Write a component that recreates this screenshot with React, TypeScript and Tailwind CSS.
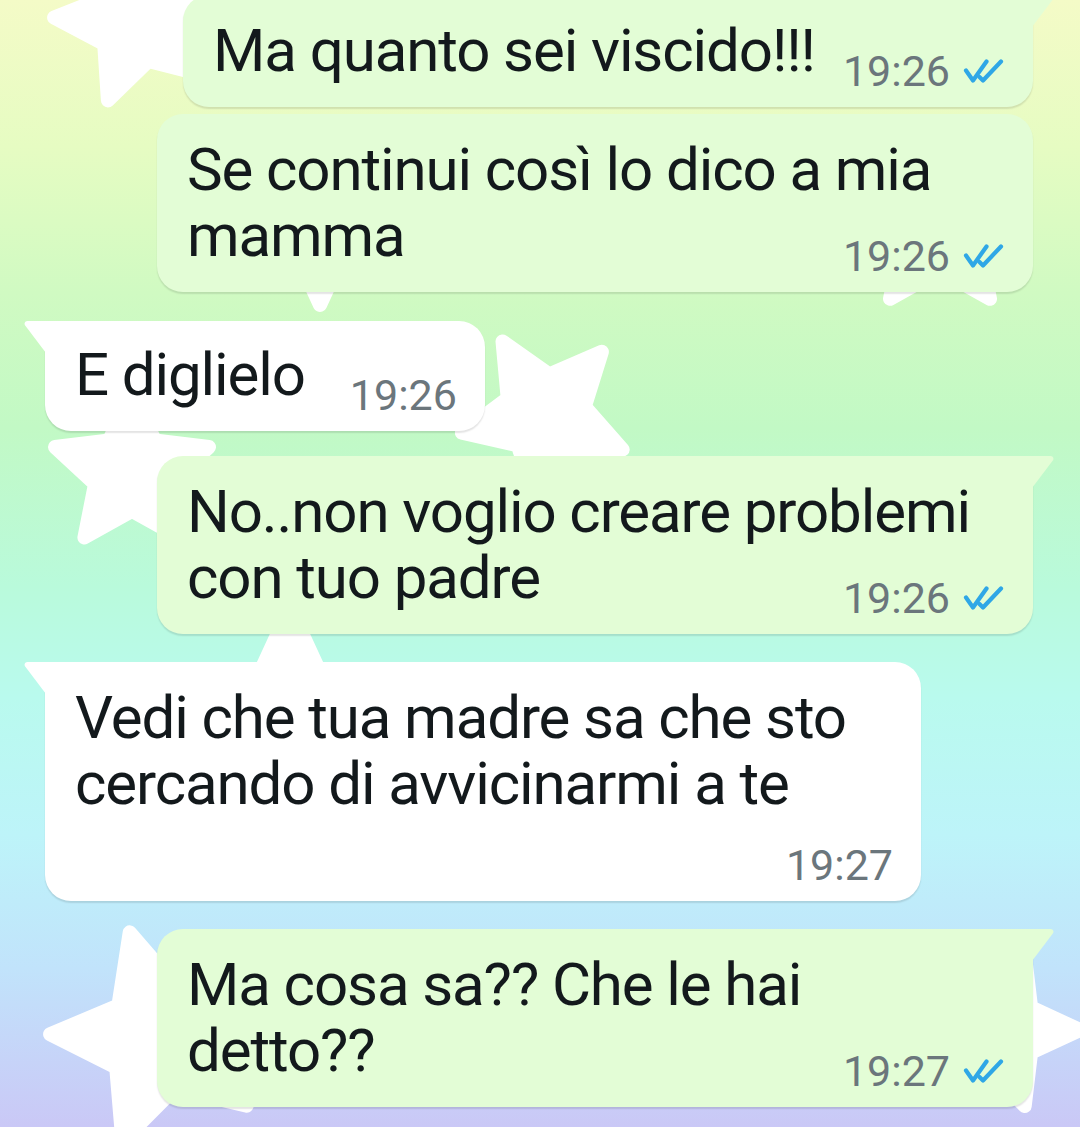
import { clsx } from 'clsx';

type Star = { cx: number; cy: number; r: number; tip: number };

// Stelle bianche dello sfondo, molte restano quasi tutte sotto le nuvolette.
const STARS: Star[] = [
  { cx: 138, cy: 22, r: 84, tip: 183 },
  { cx: 545, cy: 415, r: 85, tip: 240 },
  { cx: 132, cy: 472, r: 81, tip: 270 },
  { cx: 320, cy: 210, r: 95, tip: 90 },
  { cx: 940, cy: 230, r: 85, tip: 270 },
  { cx: 290, cy: 712, r: 105, tip: 270 },
  { cx: 160, cy: 1038, r: 110, tip: 182 },
  { cx: 1000, cy: 1030, r: 80, tip: 0 },
];

function starPoints({ cx, cy, r, tip }: Star): string {
  const pts: string[] = [];
  for (let i = 0; i < 10; i++) {
    const a = ((tip + i * 36) * Math.PI) / 180;
    const rad = i % 2 === 0 ? r : r * 0.48;
    pts.push(`${(cx + rad * Math.cos(a)).toFixed(1)},${(cy + rad * Math.sin(a)).toFixed(1)}`);
  }
  return pts.join(' ');
}

function Wallpaper() {
  return (
    <svg className="absolute inset-0 h-full w-full" viewBox="0 0 1080 1127" aria-hidden>
      {STARS.map((s) => (
        <polygon
          key={`${s.cx}-${s.cy}`}
          points={starPoints(s)}
          fill="#ffffff"
          stroke="#ffffff"
          strokeWidth={14}
          strokeLinejoin="round"
        />
      ))}
    </svg>
  );
}

function DoubleCheck() {
  return (
    <svg
      viewBox="0 0 42 25"
      className="h-[25px] w-[42px] flex-none"
      fill="none"
      stroke="#2fa7e6"
      strokeWidth={4.2}
      strokeLinecap="round"
      strokeLinejoin="round"
    >
      <path d="M3 11.5 10 21.5 23.5 2.5" />
      <path d="M16.5 18 20 21.5 38 2.5" />
    </svg>
  );
}

function Tail({ out }: { out: boolean }) {
  if (out) {
    return (
      <svg viewBox="0 0 22 32" className="absolute top-0 right-[-21px] h-[32px] w-[22px]">
        <path d="M0 0H18.5C21 0 22.3 2.6 20.8 4.6L0 32Z" fill="#e3fdd6" />
      </svg>
    );
  }
  return (
    <svg viewBox="0 0 22 32" className="absolute top-0 left-[-21px] h-[32px] w-[22px]">
      <path d="M22 0H3.5C1 0 -0.3 2.6 1.2 4.6L22 32Z" fill="#ffffff" />
    </svg>
  );
}

type BubbleProps = {
  out: boolean;
  lines: string[];
  time: string;
  tail?: boolean;
  wide?: boolean;
  timeBelow?: boolean;
  spacer?: string;
  className?: string;
};

function Bubble({ out, lines, time, tail, wide, timeBelow, spacer, className }: BubbleProps) {
  return (
    <div
      className={clsx(
        'relative rounded-[26px] pr-[28px] pb-[15px] pl-[30px] shadow-[0_2px_1.5px_rgba(0,0,0,0.11)]',
        out ? 'self-end bg-[#e3fdd6]' : 'self-start bg-white',
        tail && (out ? 'rounded-tr-none' : 'rounded-tl-none'),
        wide ? 'w-[876px]' : 'w-fit',
        className,
      )}
    >
      {tail ? <Tail out={out} /> : null}
      <p className="whitespace-nowrap text-[#13191c] text-[60px] leading-[66px] tracking-[-1.1px]">
        {lines.map((l, i) => (
          <span key={l}>
            {i > 0 ? <br /> : null}
            {l}
          </span>
        ))}
        {spacer ? <span className={clsx('inline-block', spacer)} /> : null}
      </p>
      <div
        className={clsx(
          'flex h-[42px] items-center justify-end gap-[13px]',
          timeBelow ? 'mt-[27px]' : '-mt-[34px]',
        )}
      >
        <span className="text-[#6b767c] text-[43px] leading-[42px]">{time}</span>
        {out ? <DoubleCheck /> : null}
      </div>
    </div>
  );
}

export default function App() {
  return (
    <div className="relative h-[1127px] w-[1080px] overflow-hidden bg-[linear-gradient(180deg,#f4fbc7_0%,#e6fcc2_13%,#d0fac2_26%,#c2f9c5_38%,#b9fadb_52%,#b9faee_62%,#bdf4f9_74%,#c1e3fb_86%,#cac8f6_100%)] font-[Roboto,sans-serif]">
      <Wallpaper />
      <div className="relative flex flex-col pr-[47px] pl-[45px]">
        <Bubble
          out
          tail
          lines={['Ma quanto sei viscido!!!']}
          time="19:26"
          spacer="w-[190px]"
          className="-mt-[5px] pt-[23px]"
        />
        <Bubble
          out
          wide
          lines={['Se continui così lo dico a mia', 'mamma']}
          time="19:26"
          className="mt-[7px] pt-[23px]"
        />
        <Bubble
          out={false}
          tail
          lines={['E diglielo']}
          time="19:26"
          spacer="w-[152px]"
          className="mt-[29px] pt-[21px]"
        />
        <Bubble
          out
          tail
          wide
          lines={['No..non voglio creare problemi', 'con tuo padre']}
          time="19:26"
          className="mt-[25px] pt-[23px]"
        />
        <Bubble
          out={false}
          tail
          wide
          timeBelow
          lines={['Vedi che tua madre sa che sto', 'cercando di avvicinarmi a te']}
          time="19:27"
          className="mt-[28px] pt-[23px]"
        />
        <Bubble
          out
          tail
          wide
          lines={['Ma cosa sa?? Che le hai', 'detto??']}
          time="19:27"
          className="mt-[28px] pt-[23px]"
        />
      </div>
    </div>
  );
}
